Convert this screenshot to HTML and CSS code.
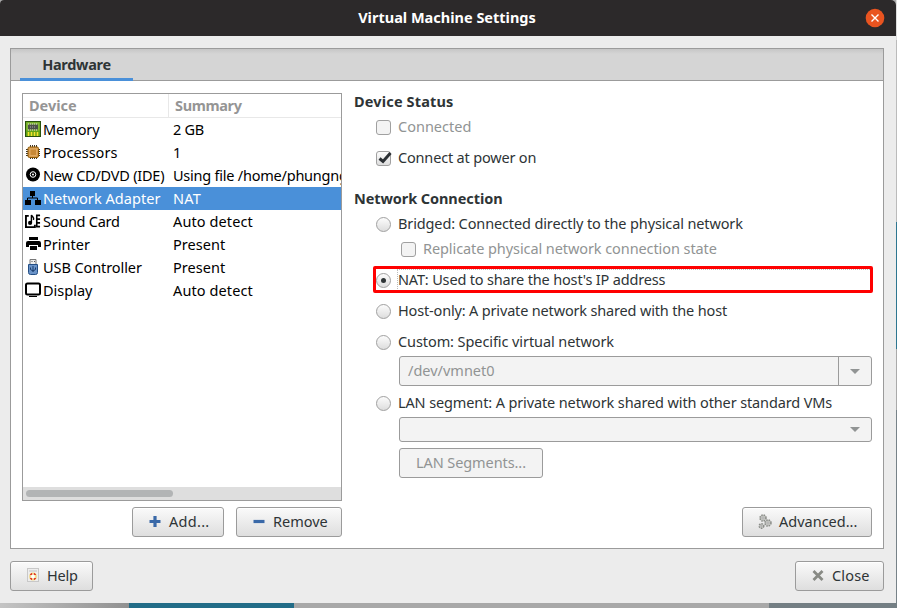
FILE: index.html
```html
<!DOCTYPE html>
<html lang="en">
<head>
<meta charset="utf-8">
<title>Virtual Machine Settings</title>
<link rel="stylesheet" href="styles.css">
</head>
<body>
<div class="window">
  <header class="titlebar">
    <h1>Virtual Machine Settings</h1>
    <svg class="win-close" width="20" height="20" viewBox="0 0 20 20"><circle cx="10" cy="10" r="9.3" fill="#e95420"/><path d="M6.5 6.5l7 7M13.5 6.5l-7 7" stroke="#fff" stroke-width="1.4"/></svg>
  </header>
  <main class="content">
    <section class="notebook">
      <nav class="tabs"><div class="tab">Hardware</div></nav>
      <div class="page">
        <div class="left">
          <div class="list">
            <div class="row head"><div class="dev">Device</div><div class="sum tight">Summary</div></div>
            <div class="row"><div class="dev"><svg width="16" height="16"><rect x=".5" y=".5" width="15" height="15" fill="#5fa317" stroke="#28510d"/><path d="M1.5 1.5h13v8h-13z" fill="#87b83a"/><rect x="3" y="3.500" width="10" height="5" fill="#4c5148"/><path d="M3 3h10M3 9h10" stroke="#ddd" stroke-dasharray="1 1"/><path d="M5 6h6" stroke="#aaa" stroke-dasharray="1 1"/><path d="M3.500 11v4M6.500 11v4M9.500 11v4M12.500 11v4" stroke="#f4e22c" stroke-width="1.600"/></svg><span class="ln05">Memory</span></div><div class="sum ln26">2 GB</div></div>
            <div class="row"><div class="dev"><svg width="16" height="16"><path d="M5.500 1v14M7.500 1v14M9.500 1v14M11.500 1v14M1 5.500h14M1 7.500h14M1 9.500h14M1 11.500h14" stroke="#3c3428"/><rect x="3" y="3" width="10.500" height="10.500" rx="1.500" fill="#d69a4e" stroke="#8f5902"/><rect x="5" y="5" width="6.500" height="6.500" fill="#c88937" stroke="#e0aa62"/></svg><span class="l08">Processors</span></div><div class="sum">1</div></div>
            <div class="row"><div class="dev"><svg width="16" height="16"><circle cx="8" cy="7.500" r="7" fill="#000"/><circle cx="8" cy="7.500" r="2.800" fill="none" stroke="#fff" stroke-width="1"/><circle cx="8" cy="7.500" r="1" fill="#fff"/></svg><span class="ln22">New CD/DVD (IDE)</span></div><div class="sum ln22">Using file /home/phungng</div></div>
            <div class="row selected"><div class="dev"><svg width="16" height="16"><path d="M5 1h5v5H5zM0 10h6v5H0zM10 10h6v5h-6z"/><path d="M7.500 5v3M2.500 11V8h10v3" fill="none" stroke="#000"/></svg><span class="l08">Network Adapter</span></div><div class="sum l25">NAT</div></div>
            <div class="row"><div class="dev"><svg width="17" height="16" viewBox="0 0 17 16"><path d="M4 2.500H1v12h9.500V12" fill="none" stroke="#000" stroke-width="2"/><path d="M6.800 10V1.500c.5 2 3.500 2.500 2.200 5.500" fill="none" stroke="#000" stroke-width="1.500"/><circle cx="5.400" cy="10" r="2.200"/><path d="M12.500 1v14M12 2h4M12 6h4M12 10h4M12 14h4" fill="none" stroke="#000" stroke-width="1.700"/></svg><span class="ln26">Sound Card</span></div><div class="sum l12">Auto detect</div></div>
            <div class="row"><div class="dev"><svg width="16" height="16"><path d="M4 1h9v3H4zM3 5h11q2 0 2 2v4h-3V9H4v2H1V7q0-2 2-2zM5 10h7v4H5z"/></svg><span>Printer</span></div><div class="sum l08">Present</div></div>
            <div class="row"><div class="dev"><svg width="16" height="16"><path d="M5 .5h6v5H5z" fill="#eee" stroke="#777"/><path d="M6.500 2.500h1M9 2.500h1" stroke="#555"/><path d="M3.500 5.500h9v8q0 2-2 2h-5q-2 0-2-2z" fill="#6a93c8" stroke="#234e85"/><path d="M8 13V7M5.500 8.500v2L8 12l2.500-1.500v-2" fill="none" stroke="#173a6b"/></svg><span class="ln05">USB Controller</span></div><div class="sum l08">Present</div></div>
            <div class="row"><div class="dev"><svg width="16" height="16"><rect x="1" y="1.500" width="14" height="11" rx="1.500" fill="#fff" stroke="#000" stroke-width="2"/><path d="M4 14.500h8" stroke="#000"/></svg><span>Display</span></div><div class="sum l12">Auto detect</div></div>
            <div class="scroll"><div class="thumb"></div></div>
          </div>
          <div class="actions">
            <div class="btn add"><svg width="14" height="14"><path d="M7 1v11M1.500 6.500h11" stroke="#3a69a8" stroke-width="3.200"/></svg><span class="l25">Add...</span></div>
            <div class="btn remove"><svg width="14" height="14"><path d="M1.500 6.500h11" stroke="#3a69a8" stroke-width="3.200"/></svg><span>Remove</span></div>
          </div>
        </div>
        <div class="right">
          <h2 class="l19">Device Status</h2>
          <div class="opt off"><i class="check"></i><span>Connected</span></div>
          <div class="opt second"><i class="check on"><svg width="17" height="16"><path d="M3.500 7.500L7 10.500l7.500-8.500" fill="none" stroke="#2b3034" stroke-width="3"/></svg></i><span class="ln18">Connect at power on</span></div>
          <h2 class="net">Network Connection</h2>
          <div class="opt"><i class="radio"></i><span class="ln12">Bridged: Connected directly to the physical network</span></div>
          <div class="opt off sub"><i class="check"></i><span class="ln05">Replicate physical network connection state</span></div>
          <div class="opt nat"><i class="radio on"></i><span class="ln15">NAT: Used to share the host's IP address</span></div>
          <div class="opt host"><i class="radio"></i><span class="ln15">Host-only: A private network shared with the host</span></div>
          <div class="opt custom"><i class="radio"></i><span class="ln07">Custom: Specific virtual network</span></div>
          <div class="combo entry"><span>/dev/vmnet0</span><div class="arrow"><i></i></div></div>
          <div class="opt lan"><i class="radio"></i><span class="ln12">LAN segment: A private network shared with other standard VMs</span></div>
          <div class="combo"><span></span><div class="arrow"><i></i></div></div>
          <div class="btn disabled segments"><span class="ln07">LAN Segments...</span></div>
          <div class="btn advanced"><svg width="16" height="16"><g fill="#c6c8c4" stroke="#8b8d89" stroke-width="1.500" stroke-dasharray="1.500 .9"><circle cx="6" cy="4" r="3"/><circle cx="11" cy="9" r="3"/><circle cx="4.500" cy="12" r="2.300"/></g><g fill="#eee" stroke="#aaa"><circle cx="6" cy="4" r="1"/><circle cx="11" cy="9" r="1"/><circle cx="4.500" cy="12" r=".7"/></g></svg><span>Advanced...</span></div>
        </div>
      </div>
    </section>
    <footer class="footer">
      <div class="btn help"><svg width="14" height="16"><rect x=".5" y=".5" width="11" height="13" fill="#eee" stroke="#c8c8c8"/><path d="M2 3h8" stroke="#d8d8d8" stroke-width="2"/><circle cx="6" cy="8.500" r="2.900" fill="#fff" stroke="#f3d98c" stroke-width="2"/><path d="M3 6.500h2M4.500 5v2M7 6.500h2M7.500 5v2M3 10.500h2M4.500 10v2M7 10.500h2M7.500 10v2" stroke="#e04030" stroke-width="1.200"/></svg><span class="ln22">Help</span></div>
      <div class="btn close"><svg width="14" height="14"><path d="M2.500 2l9 9M11.500 2l-9 9" stroke="#888a85" stroke-width="2.800"/></svg><span class="l16">Close</span></div>
    </footer>
  </main>
</div>
<div class="desk-right"></div>
<div class="desk-bottom"></div>
</body>
</html>
```
FILE: styles.css
```css
*, *::before, *::after { box-sizing: border-box; }
body {
  margin: 0; width: 897px; height: 608px; overflow: hidden;
  display: grid; grid-template: 603px 5px / 896px 1px;
  font: 14.5px/23px "Noto Sans", sans-serif; color: #2e3436; background: #aaa;
}
h1, h2 { margin: 0; font-size: 14.5px; font-weight: 700; line-height: 24px; }
svg { display: block; flex: none; }
.window { background: #ececec; border-radius: 4px 5px 0 0; overflow: hidden; display: flex; flex-direction: column; }
.titlebar { height: 36px; background: #2c292a; color: #fff; display: grid; grid-template-columns: 1fr auto 1fr; align-items: center; }
.titlebar h1 { grid-column: 2; margin: -2px 0 0 -2px; }
.win-close { grid-column: 3; justify-self: end; margin-right: 11px; }
.content { padding: 12px 12px 12px 10px; flex: 1; }
.notebook { height: 501px; border: 1px solid #9b9b9b; background: #fff; }
.tabs { height: 32px; background: linear-gradient(#c6c6c6, #d5d5d5 5px); border-bottom: 1px solid #9b9b9b; padding-left: 9px; }
.tab { width: 113px; height: 32px; text-align: center; font-weight: 700; line-height: 30px; letter-spacing: -.3px; border-bottom: 3px solid #4a90d9; }
.page { display: grid; grid-template-columns: 320px 518px; gap: 12px; padding: 12px 11px 0; height: 467px; }
.list { height: 408px; border: 1px solid #9b9b9b; display: flex; flex-direction: column; color: #000; overflow: hidden; }
.row { display: grid; grid-template-columns: 146px 1fr; height: 23px; white-space: nowrap; flex: none; }
.row .dev { display: flex; align-items: center; padding-left: 2px; gap: 2px; }
.row .dev svg { width: 16px; overflow: visible; margin-top: -2px; }
.row .sum { padding-left: 4px; }
.row.head { height: 24px; color: #959595; font-weight: 700; border-bottom: 1px solid #e8e8e8; }
.row.head .dev { padding-left: 6px; border-right: 1px solid #e8e8e8; }
.row.head .sum { padding-left: 6px; }
.row.selected { background: #4a90d9; color: #fff; }
.scroll { margin-top: auto; height: 13px; background: #dedede; padding: 3px 3px; }
.thumb { width: 147px; height: 7px; border-radius: 4px; background: #b2b4b5; }
.actions { display: flex; justify-content: flex-end; gap: 12px; margin-top: 6px; }
.btn { height: 30px; border: 1px solid #9b9b9b; border-radius: 3px; background: linear-gradient(#fafafa, #dedede); box-shadow: inset 0 1px #fff; display: flex; align-items: center; padding-left: 16px; gap: 7px; line-height: 28px; white-space: nowrap; }
.btn span { margin-top: -2px; }
.btn svg { margin-top: -1px; }
.add { width: 92px; padding-left: 15px; }
.remove { width: 106px; padding-left: 15px; }
.disabled { background: #f3f3f3; color: #919494; box-shadow: none; }
.right { display: flex; flex-direction: column; }
.right h2 { height: 18px; line-height: 16px; }
.opt { display: flex; align-items: center; height: 24px; margin: 4px 0 0 22px; gap: 7px; white-space: nowrap; }
.opt span { margin-top: -2px; }
.opt .check, .opt .radio { width: 15px; height: 15px; border: 1px solid #a0a0a0; background: linear-gradient(#fcfcfc, #ddd); flex: none; }
.check { border-radius: 3px; }
.check svg { margin: -1px; }
.radio { border-radius: 50%; display: grid; place-items: center; }
.radio.on::after { content: ""; width: 5px; height: 5px; border-radius: 50%; background: #2e3436; }
.off { color: #919494; }
.opt.off .check { background: #f3f3f3; }
.opt.second { margin-top: 7px; }
.right h2.net { margin-top: 20px; letter-spacing: -.08px; }
.opt.sub { margin: 1px 0 0 47px; }
.opt.nat { margin-top: 7px; position: relative; }
.nat::before { content: ""; position: absolute; left: -3px; top: -2px; width: 500px; height: 27px; border: 3px solid #f00; border-radius: 2px; }
.nat::after { content: ""; position: absolute; left: 21px; top: 1px; width: 473px; height: 20px; border: 1px dotted #bbb; border-width: 1px 0 0 1px; }
.opt.host, .opt.custom { margin-top: 7px; }
.combo { width: 473px; height: 25px; margin-left: 45px; border: 1px solid #9b9b9b; border-radius: 3px; background: #f3f3f3; display: flex; color: #919494; line-height: 26px; flex: none; }
.combo > span { flex: 1; padding-left: 8px; }
.arrow { width: 33px; display: grid; place-items: center; }
.entry { height: 30px; margin-top: 2px; }
.entry .arrow { border-left: 1px solid #9b9b9b; }
.arrow i { border: 5px solid transparent; border-top-color: #919494; border-bottom: 0; }
.opt.lan { margin-top: 5px; }
.lan + .combo { margin-top: 2px; }
.segments { width: 144px; margin: 6px 0 0 45px; flex: none; }
.advanced { width: 130px; margin: 29px 0 0 auto; padding-left: 14px; gap: 6px; }
.footer { display: flex; justify-content: space-between; margin-top: 12px; }
.help { width: 83px; }
.help span { margin-left: -1px; }
.close { width: 89px; padding-left: 15px; }
.desk-right { background: linear-gradient(#ddd 0 40px, #bbb 40px 222px, #2e7791 222px 349px, #aaa 349px 410px, #778288 410px); }
.desk-bottom { grid-column: 1 / 3; background: linear-gradient(90deg, #c4c4c4 0, #909090 129px, #226c87 129px 294px, #a8a8a8 294px 769px, #747f84 769px); }
.tight { letter-spacing: -.36px; }
.ln26 { letter-spacing: -.26px; }
.ln22 { letter-spacing: -.23px; }
.ln18 { letter-spacing: -.18px; }
.ln15 { letter-spacing: -.165px; }
.ln12 { letter-spacing: -.125px; }
.ln07, .ln05 { letter-spacing: -.085px; }
.l08 { letter-spacing: .05px; }
.l12 { letter-spacing: .11px; }
.l16, .l19 { letter-spacing: .16px; }
.l25 { letter-spacing: .3px; }
```
